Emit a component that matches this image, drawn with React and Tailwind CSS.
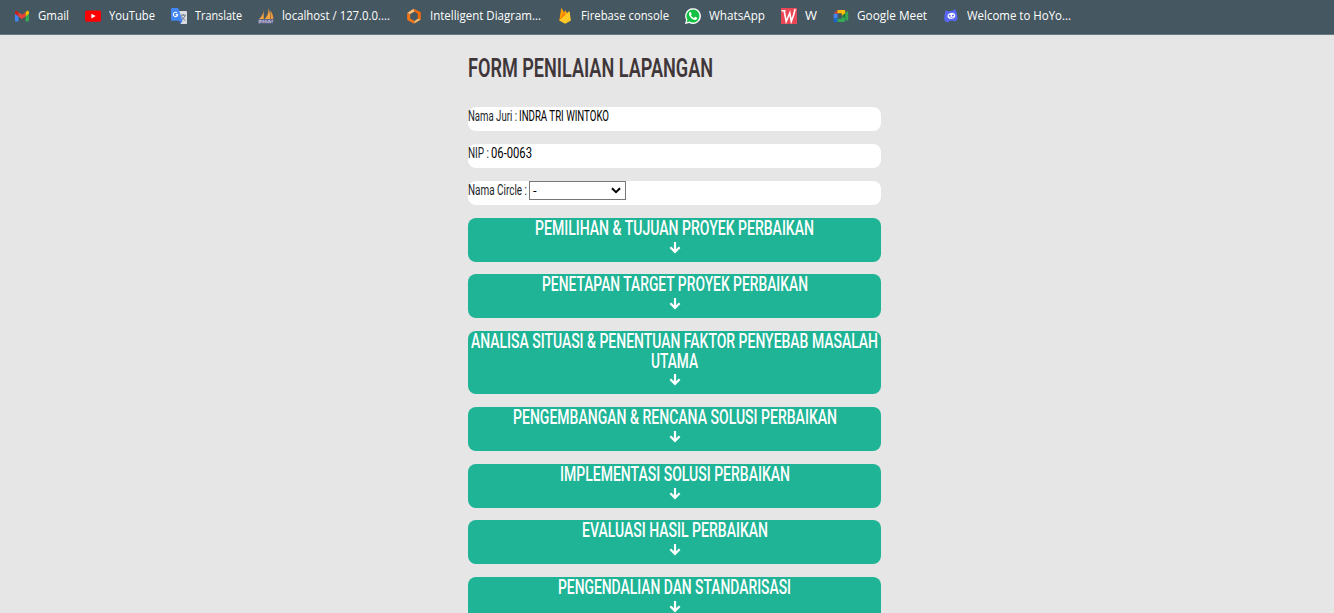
import { useLayoutEffect, useRef, useState } from "react";

/* Condenses or expands one line of text to a fixed advance width. */
function Fit({ width, className = "", children }) {
  const ref = useRef(null);
  const [scale, setScale] = useState(1);
  useLayoutEffect(() => {
    const natural = parseFloat(getComputedStyle(ref.current).width);
    setScale(width / natural);
  }, [width]);
  return (
    <span className="flex shrink-0 items-start" style={{ width }}>
      <span
        ref={ref}
        className={"block shrink-0 origin-left whitespace-nowrap " + className}
        style={{ transform: `scaleX(${scale})` }}
      >
        {children}
      </span>
    </span>
  );
}

const svg = { width: 16, height: 16, viewBox: "0 0 16 16", className: "shrink-0" };

const GmailIcon = () => (
  <svg {...svg}>
    <path fill="#4285f4" d="M1 5v7.500c0 .6.500 1 1 1h2.500V7.300z" />
    <path fill="#34a853" d="M15 5v7.500c0 .6-.5 1-1 1h-2.500V7.300z" />
    <path fill="#c5221f" d="M1 4.200v1.500l3.500 2.700V4.300L3.300 3.200C2.300 2.400 1 3.100 1 4.200z" />
    <path fill="#fbbc04" d="M15 4.200v1.500l-3.500 2.700V4.300l1.200-1.100c1-.8 2.300-.1 2.300 1z" />
    <path fill="#ea4335" d="M4.500 4.200 8 6.800l3.500-2.600v4.200L8 11 4.500 8.400z" />
  </svg>
);

const YouTubeIcon = () => (
  <svg {...svg}>
    <rect x="0" y="2.400" width="16" height="11.400" rx="2" fill="#f00" />
    <path fill="#fff" d="M6.400 5.700v4.800l4.200-2.400z" />
  </svg>
);

const TranslateIcon = () => (
  <svg {...svg}>
    <path fill="#dadce0" d="M6 3h9.300c.4 0 .7.300.7.700v11.600c0 .4-.3.700-.7.700H9.500z" />
    <path stroke="#6b7c87" strokeWidth="1" fill="none" d="M9.800 7.200h5M12.200 6v1.200M14 7.500c-.6 2.200-2 3.600-3.500 4.700M10.700 8.500c.8 1.800 2 3 3.600 4" />
    <path fill="#4285f4" d="M.7 0h6.500l4.300 12.800H.7c-.4 0-.7-.3-.7-.7V.700C0 .300.300 0 .700 0z" />
    <path fill="#3367d6" d="M8 12.800h3.500L9.300 16z" />
    <path fill="none" stroke="#fff" strokeWidth="1.100" d="M6.100 4.900a2.200 2.200 0 1 0 .6 1.700H4.700" />
  </svg>
);

const PmaIcon = () => (
  <svg {...svg}>
    <path fill="#f6a13b" d="M5.600 1.200C5.800 4.800 4 8.500 1 11h4.800zM10.200 0C11 4.500 9.500 8.500 6.500 11h5.600c.4-4-.3-8-1.900-11z" />
    <path fill="#f09a38" d="M12.300 2.600c2 2.500 3 5.400 3 8.400h-2.600z" />
    <path fill="#6c6c95" d="M0 11.200h16l-1.100 4.300H1z" />
    <path fill="none" stroke="#c5c4dc" strokeWidth=".8" d="M1.200 15.500v-3h2v1.500h-2M5 15v-2.700l1.500 1.800L8 12.300V15M9.800 15v-1.500l1.500-1.300 1.200 1.300V15M9.800 14h2.700M14.200 12v2" />
  </svg>
);

const DiagramIcon = () => (
  <svg {...svg}>
    <path fill="#f57614" d="M1.200 5.200 4.200 5.800v4.700L8.300 13v2.800L1.200 12z" />
    <path fill="#ffc078" d="M1.200 5 7.600.8 8.600 3.400 4.200 6z" />
    <path fill="#f26b0a" d="M7.800.8 14.800 4.200v7.300l-3 .2V5.800L8.300 3.600z" />
    <path fill="#ffb868" d="m8.300 15.600.2-2.600 3.300-2.200 3 .6z" />
  </svg>
);

const FirebaseIcon = () => (
  <svg {...svg}>
    <path fill="#ffa000" d="M2.300 12.500 4.200.6c.1-.4.500-.4.700-.1l2.200 4 1-1.800c.2-.3.500-.3.700 0l4.600 9.800z" />
    <path fill="#f57c00" d="m9.300 8.500-2.200-4-4.800 8z" />
    <path fill="#ffca28" d="m2.300 12.500 9.500-9c.3-.3.700-.1.800.2l1.300 8.800-5.200 3c-.4.200-.8.200-1.200 0z" />
  </svg>
);

const WhatsAppIcon = () => (
  <svg {...svg}>
    <path fill="#fff" d="M0 16l1.100-4.100A7.900 7.900 0 1 1 4.200 15z" />
    <path fill="#12c143" d="m1.700 14.300.8-2.700a6.500 6.500 0 1 1 2.100 2z" />
    <path fill="#fff" d="M5.200 4.100c-.3 0-1.200.6-1.200 1.800 0 2.700 3.600 6 6.200 6 1.200 0 2-.9 2-1.800 0-.3-.1-.4-.3-.5l-1.500-.7c-.3-.1-.5 0-.6.2l-.6.7c-.1.200-.3.200-.6.100-1.200-.5-2-1.300-2.600-2.300-.1-.2 0-.4.100-.5l.5-.7c.1-.2.1-.3 0-.5l-.7-1.500c-.1-.2-.3-.3-.7-.3z" />
  </svg>
);

const WIcon = () => (
  <svg {...svg}>
    <path fill="#e94755" d="M0 0h16v16H0z" />
    <path fill="none" stroke="#fff" strokeWidth="1.600" d="M.5 2.800h4M3.200 3l2 10.500L8.800 5l1.500 8.500C12 9.500 13.200 5.500 14.200 1" />
  </svg>
);

const MeetIcon = () => (
  <svg {...svg}>
    <path fill="#ea4335" d="M.7 5.800 4.500 2v3.800z" />
    <path fill="#4285f4" d="M.7 5.800h3.800v4.600H.7z" />
    <path fill="#1967d2" d="M.7 10.400h3.800V14H1.800c-.6 0-1.100-.5-1.100-1.100z" />
    <path fill="#fbbc04" d="M4.500 2h6.600c.7 0 1.200.5 1.200 1.200v2.600L8.800 8V5.200H4.500z" />
    <path fill="#34a853" d="M4.500 10.800h4.300V8l3.500 2.200v2.600c0 .7-.5 1.200-1.200 1.200H4.500z" />
    <path fill="#188038" d="m8.800 8 3.500-3v6z" />
    <path fill="#34a853" d="M12.300 5.200 14.700 3c.3-.2.500 0 .5.300v9.300c0 .4-.3.500-.5.300l-2.400-2z" />
  </svg>
);

const HoyoIcon = () => (
  <svg {...svg}>
    <path fill="#5865f2" d="M2.200 2.600 6 3.200 9.300 2.700 12.300 1l.9 2.800c1 1.700 1.400 4.800 1.300 7.600-1.200 1.200-2.300 1.700-3.600 2.200l-1.200-1-3 .3-.9 1.400c-1.500 0-2.900-.5-4.100-1.300C1.100 10 1.300 7.400 2 5.200z" />
    <path fill="#fff" d="M8.300 4.900c2.200-.2 3.900.8 4 2.700.1 1.900-1.500 3.200-3.700 3.400s-4-.8-4.100-2.700c-.2-1.900 1.500-3.200 3.800-3.400z" />
    <circle cx="6.700" cy="7.700" r="1" fill="#5865f2" />
    <circle cx="10" cy="7.400" r="1" fill="#5865f2" />
    <path fill="none" stroke="#5865f2" strokeWidth=".7" d="M7 9.700h3" />
  </svg>
);

const bookmarks = [
  [GmailIcon, "Gmail", 31],
  [YouTubeIcon, "YouTube", 46],
  [TranslateIcon, "Translate", 47],
  [PmaIcon, "localhost / 127.0.0....", 108],
  [DiagramIcon, "Intelligent Diagram...", 111],
  [FirebaseIcon, "Firebase console", 88],
  [WhatsAppIcon, "WhatsApp", 56],
  [WIcon, "W", 12],
  [MeetIcon, "Google Meet", 70],
  [HoyoIcon, "Welcome to HoYo...", 104],
];

const sections = [
  { lines: [["PEMILIHAN & TUJUAN PROYEK PERBAIKAN", 279]], box: "h-[44px] mb-[12px]" },
  { lines: [["PENETAPAN TARGET PROYEK PERBAIKAN", 266]], box: "h-[44px] mb-[13px]" },
  { lines: [["ANALISA SITUASI & PENENTUAN FAKTOR PENYEBAB MASALAH", 407], ["UTAMA", 47]], box: "h-[63px] mb-[13px]" },
  { lines: [["PENGEMBANGAN & RENCANA SOLUSI PERBAIKAN", 324]], box: "h-[44px] mb-[13px]" },
  { lines: [["IMPLEMENTASI SOLUSI PERBAIKAN", 230]], box: "h-[44px] mb-[12px]" },
  { lines: [["EVALUASI HASIL PERBAIKAN", 186]], box: "h-[44px] mb-[13px]" },
  { lines: [["PENGENDALIAN DAN STANDARISASI", 233]], box: "h-[44px]" },
];

const small = "text-[14px] leading-[18px]";

export default function App() {
  return (
    <div className="h-[613px] overflow-hidden bg-[#e6e6e6] font-['Roboto',sans-serif]">
      <nav className="flex h-[35px] gap-4 border-b border-[#687982] bg-[#455760] pl-[14px] pt-2 text-white">
        {bookmarks.map(([Icon, label, width]) => (
          <a key={label} className="flex h-4 gap-2">
            <Icon />
            <Fit width={width} className="font-['Open_Sans',sans-serif] text-[12px] leading-4">{label}</Fit>
          </a>
        ))}
      </nav>

      <main className="ml-[468px] w-[413px]">
        <h1 className="mb-[22px] box-content h-8 pt-[18px] text-[#3f3639]">
          <Fit width={245} className="text-[25px] font-semibold leading-8">FORM PENILAIAN LAPANGAN</Fit>
        </h1>

        <div className="mb-[13px] flex h-6 gap-[2px] rounded-lg bg-white text-black">
          <Fit width={49} className={small + " text-[#212529]"}>Nama Juri :</Fit>
          <Fit width={90} className={small}>INDRA TRI WINTOKO</Fit>
        </div>
        <div className="mb-[13px] flex h-6 gap-[2px] rounded-lg bg-white text-black">
          <Fit width={21} className={small + " text-[#212529]"}>NIP :</Fit>
          <Fit width={41} className={small}>06-0063</Fit>
        </div>
        <div className="mb-[13px] flex h-6 gap-[2px] rounded-lg bg-white text-black">
          <Fit width={59} className={small + " text-[#212529]"}>Nama Circle :</Fit>
          <div className="flex h-[19px] w-[97px] items-center justify-between border border-[#767676] bg-white pl-[3px] pr-[4px]">
            <span className="text-[13px] leading-4">-</span>
            <svg width="10" height="7" viewBox="0 0 10 7">
              <path d="M1 1.200 5 5.200 9 1.200" fill="none" stroke="#000" strokeWidth="2" />
            </svg>
          </div>
        </div>

        {sections.map(({ lines, box }) => (
          <button key={lines[0][0]} className={"flex w-full flex-col items-center rounded-lg bg-[#1fb496] text-white " + box}>
            {lines.map(([text, width]) => (
              <Fit key={text} width={width} className="text-[20px] font-medium leading-5">{text}</Fit>
            ))}
            <svg width="12" height="12" viewBox="0 0 12 12" className={"shrink-0 " + (lines.length > 1 ? "mt-[3px]" : "mt-[4px]")}>
              <path d="M6 0v10M1.300 5.200 6 9.900l4.700-4.700" fill="none" stroke="#fff" strokeWidth="2.200" />
            </svg>
          </button>
        ))}
      </main>
    </div>
  );
}
